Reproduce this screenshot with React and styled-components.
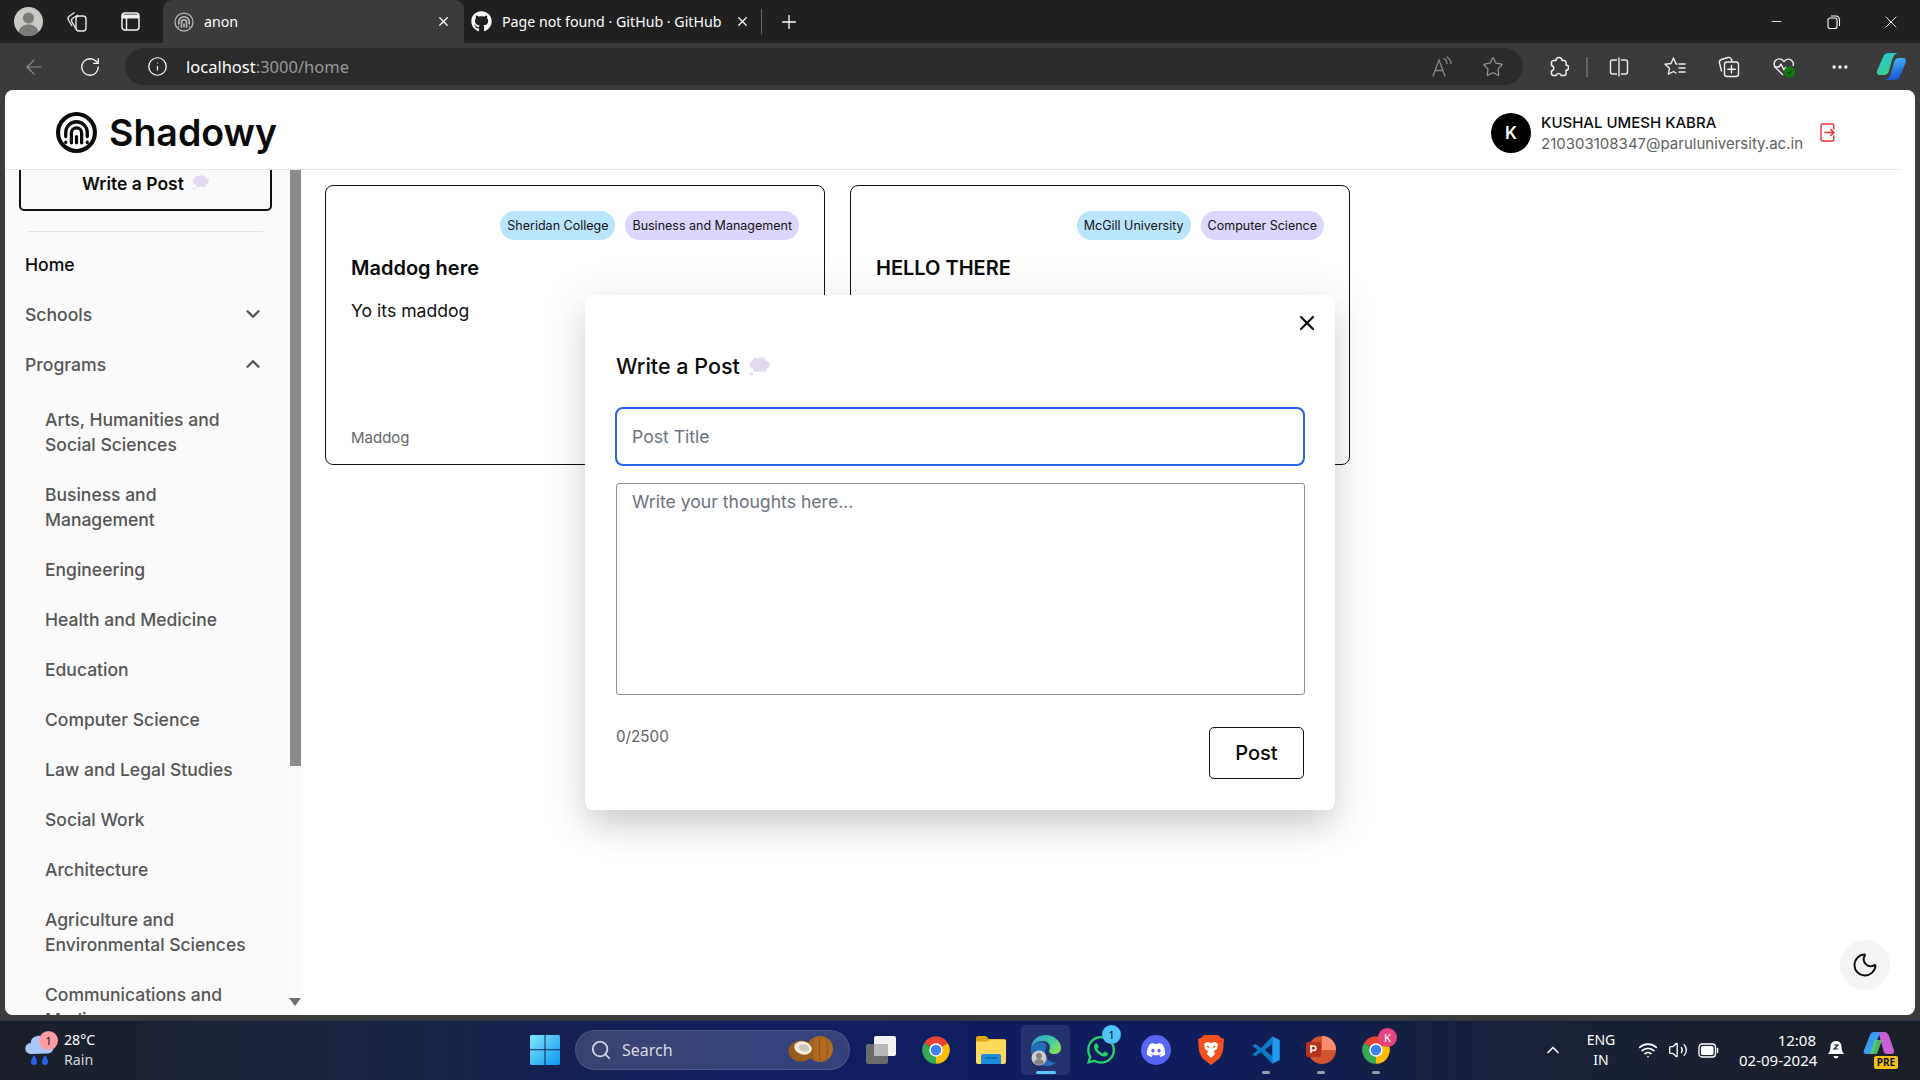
import React from "react";
import styled, { createGlobalStyle } from "styled-components";
import {
  ArrowLeft, ChevronDown, ChevronUp, Ellipsis, Info, Minus, Moon, Plus,
  RotateCw, Search, Star, Volume2, Wifi, X,
} from "lucide-react";
import { FaDiscord, FaGithub, FaWhatsapp } from "react-icons/fa";

const GlobalStyle = createGlobalStyle`
  html, body { margin: 0; padding: 0; height: 100%; overflow: hidden; }
  * { box-sizing: border-box; }
  body { font-family: Inter, "Liberation Sans", sans-serif; background: #3b3b3b; }
`;

const Screen = styled.div`
  width: 1920px;
  height: 1080px;
  display: flex;
  flex-direction: column;
`;

/* browser chrome */
const TabStrip = styled.div`
  height: 43px;
  background: #202020;
  display: flex;
  align-items: center;
  color: #fff;
  font-family: "Noto Sans", sans-serif;
  font-size: 14.2px;
`;
const Slot = styled.div`
  flex: none;
  width: ${(p) => p.$w || 55}px;
  margin-left: ${(p) => p.$ml || 0}px;
  display: flex;
  align-items: center;
  justify-content: center;
  color: ${(p) => p.$color || "#fff"};
`;
const ActiveTab = styled.div`
  width: 301px;
  height: 43px;
  margin-left: 6px;
  padding: 0 13px 0 11px;
  background: #3b3b3b;
  border-radius: 9px 9px 0 0;
  display: flex;
  align-items: center;
  gap: 10px;
`;
const Tab = styled.div`
  width: 297px;
  height: 43px;
  padding: 0 11px 0 7px;
  display: flex;
  align-items: center;
  gap: 10px;
`;
const TabTitle = styled.span`
  flex: 1;
  margin-top: -1px;
  white-space: nowrap;
`;
const TabDivider = styled.div`
  width: 1px;
  height: 25px;
  background: #666;
`;
const Grow = styled.div`
  flex: 1;
`;
const Toolbar = styled.div`
  height: 47px;
  background: #3b3b3b;
  display: flex;
  align-items: center;
  padding-left: 6px;
`;
const AddressBar = styled.div`
  width: 1398px;
  height: 37px;
  margin-left: 7px;
  padding: 0 0 0 22px;
  background: #2b2b2b;
  border-radius: 19px;
  display: flex;
  align-items: center;
  color: #fff;
`;
const Url = styled.div`
  flex: 1;
  margin-left: 18px;
  font-family: "Noto Sans", sans-serif;
  font-size: 16.5px;
  color: #9a9a9a;
  span { color: #fff; }
`;
const ToolDivider = styled.div`
  width: 2px;
  height: 20px;
  background: #666;
`;
const Frame = styled.div`
  flex: 1;
  min-height: 0;
  padding: 0 5px 5px;
  background: #3b3b3b;
`;

/* page */
const Page = styled.div`
  position: relative;
  height: 925px;
  background: #fff;
  border-radius: 8px;
  overflow: hidden;
  display: flex;
  flex-direction: column;
`;
const Header = styled.header`
  flex: none;
  height: 80px;
  margin-right: 15px;
  padding: 6px 65px 0 51px;
  border-bottom: 1px solid #e5e5e5;
  display: flex;
  align-items: center;
  justify-content: space-between;
`;
const Brand = styled.div`
  display: flex;
  align-items: center;
  gap: 12px;
  font-size: 37.5px;
  font-weight: 600;
  color: #0a0a0a;
`;
const User = styled.div`
  display: flex;
  align-items: center;
`;
const Avatar = styled.div`
  width: 40px;
  height: 40px;
  border-radius: 50%;
  background: #000;
  color: #fff;
  font-size: 17px;
  font-weight: 600;
  display: flex;
  align-items: center;
  justify-content: center;
`;
const UserText = styled.div`
  margin: 0 17px 0 10px;
  display: flex;
  flex-direction: column;
  gap: 2px;
`;
const UserName = styled.div`
  font-size: 15px;
  font-weight: 500;
  line-height: 19px;
  color: #0a0a0a;
`;
const UserMail = styled.div`
  font-size: 15px;
  line-height: 19px;
  color: #606060;
`;
const Body = styled.div`
  flex: 1;
  min-height: 0;
  display: flex;
`;
const Sidebar = styled.aside`
  flex: none;
  width: 285px;
  background: #fafafa;
  overflow: hidden;
`;
const SideInner = styled.div`
  margin-top: -14px;
  padding: 0 18px 0 14px;
`;
const WriteButton = styled.div`
  height: 55px;
  border: 2px solid #111;
  border-top-width: 1px;
  border-radius: 5px;
  background: #fafafa;
  display: flex;
  align-items: center;
  justify-content: center;
  gap: 8px;
  font-size: 17.5px;
  font-weight: 600;
  color: #0a0a0a;
`;
const SideRule = styled.hr`
  margin: 20px 9px 0;
  border: 0;
  border-top: 1px solid #e5e5e5;
`;
const NavList = styled.nav`
  margin-top: 7px;
  padding-left: 6px;
`;
const NavRow = styled.div`
  height: 50px;
  padding-right: 8px;
  display: flex;
  align-items: center;
  justify-content: space-between;
  font-size: 17.6px;
  font-weight: 500;
  color: ${(p) => (p.$active ? "#0a0a0a" : "#555")};
`;
const SubList = styled.div`
  padding: 5px 0 0 20px;
`;
const SubItem = styled.div`
  padding: 12.5px 0;
  font-size: 17.5px;
  line-height: 25px;
  font-weight: 500;
  color: #555;
`;
const Scrollbar = styled.div`
  flex: none;
  width: 11px;
  display: flex;
  flex-direction: column;
  justify-content: space-between;
  background: #fbfbfb;
  padding-bottom: 9px;
`;
const Thumb = styled.div`
  height: 596px;
  background: #8b8b8b;
`;
const ScrollArrow = styled.div`
  width: 0;
  height: 0;
  margin-left: -1px;
  border-left: 6.5px solid transparent;
  border-right: 6.5px solid transparent;
  border-top: 8px solid #6f6f6f;
`;
const Main = styled.main`
  flex: 1;
  padding: 15px 0 0 24px;
  display: flex;
  align-items: flex-start;
  gap: 25px;
`;
const Card = styled.article`
  width: 500px;
  height: 280px;
  padding: 25px 25px 0 25px;
  border: 1px solid #111;
  border-radius: 8px;
  display: flex;
  flex-direction: column;
`;
const TagRow = styled.div`
  display: flex;
  justify-content: flex-end;
  gap: 10px;
`;
const Tag = styled.span`
  height: 29px;
  padding: 0 7px;
  border-radius: 15px;
  background: ${(p) => p.$bg};
  font-size: 12.5px;
  line-height: 29px;
  color: #111;
`;
const CardTitle = styled.h3`
  margin: 14px 0 0;
  font-size: 20px;
  line-height: 28px;
  font-weight: 600;
  color: #0a0a0a;
`;
const CardText = styled.p`
  margin: 16px 0 0;
  font-size: 17.6px;
  line-height: 26px;
  color: #111;
`;
const CardAuthor = styled.div`
  margin-top: auto;
  margin-bottom: 16px;
  font-size: 15px;
  line-height: 20px;
  color: #666;
`;

/* dialog */
const Modal = styled.section`
  position: absolute;
  left: 580px;
  top: 205px;
  width: 750px;
  height: 515px;
  padding: 57px 30px 31px;
  background: #fff;
  border-radius: 8px;
  box-shadow: 0 20px 32px -5px rgba(0, 0, 0, 0.13), 0 8px 44px 6px rgba(0, 0, 0, 0.09);
  display: flex;
  flex-direction: column;
`;
const CloseButton = styled.div`
  position: absolute;
  top: 16px;
  right: 16px;
  color: #0a0a0a;
  display: flex;
`;
const ModalTitle = styled.h2`
  margin: 0 0 0 1px;
  display: flex;
  align-items: center;
  gap: 9px;
  font-size: 21.5px;
  line-height: 28px;
  font-weight: 500;
  color: #0a0a0a;
`;
const TitleInput = styled.input`
  margin-top: 27px;
  height: 59px;
  padding: 0 15px;
  border: 2px solid #2563eb;
  border-radius: 8px;
  outline: 0;
  font-family: inherit;
  font-size: 17.6px;
  &::placeholder { color: #6b7280; opacity: 1; }
`;
const BodyInput = styled.textarea`
  margin: 17px 0 0 1px;
  height: 212px;
  padding: 6px 15px;
  border: 1px solid #8a919c;
  border-radius: 3px;
  outline: 0;
  resize: none;
  font-family: inherit;
  font-size: 17.6px;
  line-height: 24px;
  &::placeholder { color: #6b7280; opacity: 1; }
`;
const ModalFooter = styled.div`
  margin-top: 32px;
  padding-right: 1px;
  display: flex;
  justify-content: space-between;
  align-items: flex-start;
`;
const Counter = styled.div`
  margin: 1px 0 0 1px;
  font-size: 15.2px;
  line-height: 18px;
  color: #606060;
`;
const PostButton = styled.div`
  width: 95px;
  height: 52px;
  border: 1px solid #111;
  border-radius: 5px;
  display: flex;
  align-items: center;
  justify-content: center;
  font-size: 20px;
  font-weight: 500;
  color: #0a0a0a;
`;
const MoonButton = styled.div`
  position: absolute;
  right: 25px;
  bottom: 25px;
  width: 50px;
  height: 50px;
  border-radius: 50%;
  background: #f4f4f4;
  color: #0a0a0a;
  display: flex;
  align-items: center;
  justify-content: center;
`;

/* windows taskbar */
const Taskbar = styled.footer`
  flex: none;
  height: 60px;
  padding: 0 0 1px 25px;
  background: linear-gradient(90deg, #1a1f29 0%, #18233f 18%, #0f1f62 40%, #0e1c5c 62%, #17213a 78%, #1b1f28 100%);
  border-top: 1px solid #2b3250;
  display: flex;
  align-items: center;
  color: #fff;
  font-family: "Noto Sans", sans-serif;
  font-size: 14px;
`;
const Weather = styled.div`
  position: relative;
  width: 492px;
  height: 44px;
  display: flex;
  align-items: center;
  gap: 9px;
`;
const Badge = styled.div`
  position: absolute;
  left: ${(p) => p.$l}px;
  top: ${(p) => p.$t}px;
  width: 19px;
  height: 19px;
  border-radius: 50%;
  background: ${(p) => p.$bg};
  color: ${(p) => p.$fg || "#111"};
  font-size: 11.5px;
  line-height: 19px;
  text-align: center;
`;
const WeatherText = styled.div`
  display: flex;
  flex-direction: column;
  line-height: 20px;
  font-size: 14.2px;
`;
const Muted = styled.span`
  color: #d5d8de;
`;
const SearchPill = styled.div`
  flex: none;
  width: 275px;
  height: 40px;
  margin: 0 3px;
  padding: 0 15px 0 14px;
  border-radius: 20px;
  background: rgba(255, 255, 255, 0.16);
  border: 1px solid rgba(255, 255, 255, 0.1);
  display: flex;
  align-items: center;
  gap: 10px;
  font-size: 16px;
  color: #d9dce6;
`;
const TaskSlot = styled.div`
  position: relative;
  flex: none;
  width: 55px;
  height: 50px;
  display: flex;
  align-items: center;
  justify-content: center;
`;
const HoverBox = styled.div`
  position: absolute;
  inset: 0 3px;
  border-radius: 5px;
  background: rgba(255, 255, 255, 0.09);
`;
const RunningDot = styled.div`
  position: absolute;
  left: 50%;
  bottom: 1px;
  width: ${(p) => (p.$wide ? 20 : 8)}px;
  height: 3.5px;
  transform: translateX(-50%);
  border-radius: 2px;
  background: ${(p) => (p.$wide ? "#5cc8fa" : "#9a9fa8")};
`;
const DiscordDisc = styled.div`
  width: 30px;
  height: 30px;
  border-radius: 50%;
  background: #5865f2;
  color: #fff;
  display: flex;
  align-items: center;
  justify-content: center;
`;
const Tray = styled.div`
  margin-left: auto;
  padding-right: 22px;
  display: flex;
  align-items: center;
`;
const TrayLines = styled.div`
  width: ${(p) => p.$w}px;
  margin-left: ${(p) => p.$ml}px;
  display: flex;
  flex-direction: column;
  line-height: 20px;
  font-size: ${(p) => p.$size || 14}px;
  text-align: ${(p) => p.$align};
  white-space: nowrap;
`;
const PreWrap = styled.div`
  position: relative;
  width: 36px;
  height: 38px;
`;
const PreLabel = styled.div`
  position: absolute;
  right: 0;
  bottom: 0;
  width: 24px;
  height: 13px;
  border-radius: 2px;
  background: #f6c21a;
  color: #111;
  font-size: 10px;
  font-weight: 700;
  line-height: 13px;
  text-align: center;
`;

const Bubble = ({ size = 21 }) => (
  <svg width={size} height={(size * 19) / 21} viewBox="0 0 21 19">
    <g fill="#e2d9f0">
      <circle cx="7" cy="4.6" r="3.6" />
      <circle cx="12.500" cy="4.200" r="4" />
      <circle cx="17" cy="7.500" r="3.800" />
      <circle cx="14" cy="11" r="4" />
      <circle cx="8" cy="11" r="4" />
      <circle cx="4.600" cy="7.800" r="3.800" />
      <rect x="5" y="4" width="12" height="8" />
      <circle cx="2.400" cy="17" r="1.600" />
    </g>
  </svg>
);

const Logo = ({ size = 41, ring = 4, color = "#0a0a0a" }) => (
  <svg width={size} height={size} viewBox="0 0 40 40" fill="none" stroke={color} strokeLinecap="round">
    <circle cx="20" cy="20" r={18} strokeWidth={ring} />
    <g strokeWidth="3.200">
      <path d="M9.500 24V20a10.500 10.500 0 0 1 21 0v4" />
      <path d="M15 30v-9.500a5 5 0 0 1 10 0V30" />
      <path d="M20 24v6" />
      <path d="M9.500 29.500v.2M30.500 29.500v.2" />
    </g>
  </svg>
);

const LogoutIcon = () => (
  <svg width="15" height="19" viewBox="0 0 15 19" fill="none" stroke="#ef2b35" strokeWidth="1.4" strokeLinecap="round" strokeLinejoin="round">
    <path d="M13.800 6V2.600a1.600 1.600 0 0 0-1.600-1.600H2.600A1.600 1.600 0 0 0 1 2.600v13.800A1.600 1.600 0 0 0 2.600 18h9.600a1.600 1.600 0 0 0 1.600-1.600V13" />
    <path d="M5 9.500h9M10.800 6.400l3.200 3.100-3.200 3.100" />
  </svg>
);

const ProfileIcon = () => (
  <svg width="29" height="29" viewBox="0 0 29 29">
    <circle cx="14.500" cy="14.500" r="14.500" fill="#c9c9c6" />
    <circle cx="14.500" cy="11" r="5.600" fill="#7a7a78" />
    <path d="M4.500 25c1.500-5.500 5.500-7.500 10-7.500s8.500 2 10 7.500a14.500 14.500 0 0 1-20 0z" fill="#7a7a78" />
  </svg>
);

const WorkspacesIcon = () => (
  <svg width="22" height="24" viewBox="0 0 22 24" fill="none" stroke="#e8e8e8" strokeWidth="1.4" strokeLinejoin="round">
    <rect x="10" y="6" width="10" height="15" rx="3" />
    <path d="M10 19 6 12a3 3 0 0 1 1-4l5-3" />
    <path d="M6 16 2.500 10a3 3 0 0 1 1-4l5-3.500" />
  </svg>
);

const TabsIcon = () => (
  <svg width="19" height="19" viewBox="0 0 19 19" fill="none" stroke="#f2f2f2" strokeWidth="1.5">
    <rect x="1" y="1" width="17" height="17" rx="3" />
    <path d="M1 4.500h17" strokeWidth="4" />
    <path d="M5.500 6v12" />
  </svg>
);

const ReadAloud = () => (
  <svg width="22" height="22" viewBox="0 0 22 22" fill="none" stroke="#8a8a8a" strokeWidth="1.3" strokeLinecap="round">
    <path d="M2 20 8 4l6 16M4.200 14.500h7.600" />
    <path d="M13 2.500c2 1 3 3 3 5M16 1c2.500 1.600 4 3.800 4 6.500" />
  </svg>
);

const PuzzleIcon = () => (
  <svg width="20" height="21" viewBox="0 0 20 21" fill="none" stroke="#f0f0f0" strokeWidth="1.5" strokeLinejoin="round">
    <path d="M7 4.500a3 3 0 0 1 6 0h2.500a2 2 0 0 1 1.500 2V9a2.600 2.600 0 0 1 0 5.200v3.300a2 2 0 0 1-2 2h-2.800a2.700 2.700 0 0 0-5.200 0H4.500a2 2 0 0 1-2-2V15a2.800 2.800 0 0 0 0-5.500V6.500a2 2 0 0 1 2-2z" />
  </svg>
);

const SplitIcon = () => (
  <svg width="20" height="20" viewBox="0 0 20 20" fill="none" stroke="#f0f0f0" strokeWidth="1.4">
    <path d="M8 3H3.500a2 2 0 0 0-2 2v10a2 2 0 0 0 2 2H8M12 3h4.500a2 2 0 0 1 2 2v10a2 2 0 0 1-2 2H12M10 .5v19" />
  </svg>
);

const FavListIcon = () => (
  <svg width="22" height="21" viewBox="0 0 22 21" fill="none" stroke="#f0f0f0" strokeWidth="1.4" strokeLinejoin="round" strokeLinecap="round">
    <path d="M13 8h-1L9.500 2 7 7.500l-6 .7 4.500 4-1.200 6L9.500 15.500 12 17" />
    <path d="M15 8h6M15 12h6M15 16h6" />
  </svg>
);

const CollectionsIcon = () => (
  <svg width="22" height="22" viewBox="0 0 22 22" fill="none" stroke="#f0f0f0" strokeWidth="1.4" strokeLinecap="round">
    <path d="M3.500 15 1.500 7a3 3 0 0 1 2-3.500L10 1.500a3 3 0 0 1 3.500 2L14 5" />
    <rect x="6.500" y="6" width="14" height="14.500" rx="2.500" />
    <path d="M13.500 9.500v7.500M9.800 13.200h7.500" />
  </svg>
);

const HealthIcon = () => (
  <svg width="24" height="24" viewBox="0 0 24 24" fill="none" stroke="#f0f0f0" strokeWidth="1.4" strokeLinejoin="round">
    <path d="M11 20 3.500 12.500a5 5 0 0 1 7.500-7l1 1 1-1a5 5 0 0 1 8 5.500" />
    <path d="M2 12h5l2-3 3 6 2-3" />
    <circle cx="17.500" cy="17" r="5.500" fill="#107c10" stroke="none" />
    <path d="M15 17l2 2 3-3.500" stroke="#0b4d0b" />
  </svg>
);

const Copilot = () => (
  <svg width="31" height="29" viewBox="0 0 31 29">
    <defs>
      <linearGradient id="cpA" x1="0" y1="0" x2="0.6" y2="1">
        <stop offset="0" stopColor="#26c6e8" />
        <stop offset="1" stopColor="#3ccb7f" />
      </linearGradient>
      <linearGradient id="cpB" x1="0.3" y1="0" x2="0.6" y2="1">
        <stop offset="0" stopColor="#43b8f7" />
        <stop offset="1" stopColor="#1b4fd6" />
      </linearGradient>
    </defs>
    <path d="M13 1h9c-3 .8-4.500 2.500-5.500 5.500L13 19c-.8 2.500-2.800 4-5 4H4C1.500 23 .3 21 1.200 18.500L7 5c.9-2.500 3.500-4 6-4z" fill="url(#cpA)" />
    <path d="M18 28H9c3-.8 4.500-2.500 5.500-5.500L18 10c.8-2.500 2.800-4 5-4h4c2.500 0 3.700 2 2.800 4.500L24 24c-.9 2.500-3.500 4-6 4z" fill="url(#cpB)" />
  </svg>
);

const WindowsLogo = () => (
  <svg width="30" height="30" viewBox="0 0 30 30">
    <defs>
      <linearGradient id="winA" x1="0" y1="0" x2="1" y2="1">
        <stop offset="0" stopColor="#7fe6fb" />
        <stop offset="1" stopColor="#0c97ee" />
      </linearGradient>
    </defs>
    <path d="M0 1.500A1.500 1.500 0 0 1 1.500 0h13v14.300H0zM15.500 0h13A1.500 1.500 0 0 1 30 1.500v12.800H15.500zM0 15.300h14.500V30h-13A1.500 1.500 0 0 1 0 28.500zM15.500 15.300H30v13.200a1.500 1.500 0 0 1-1.500 1.500h-13z" fill="url(#winA)" />
  </svg>
);

const RainIcon = () => (
  <svg width="30" height="36" viewBox="0 0 30 36">
    <path d="M6 22a5.500 5.500 0 0 1-.5-11 8 8 0 0 1 15-3 6.500 6.500 0 0 1 3 13.500z" fill="#a9c8f7" />
    <path d="M9 23c2 3 3 5 3 7a3 3 0 0 1-6 0c0-2 1-4 3-7zM20 23c2 3 3 5 3 7a3 3 0 0 1-6 0c0-2 1-4 3-7z" fill="#2a62e8" />
  </svg>
);

const Coconuts = () => (
  <svg width="46" height="28" viewBox="0 0 46 28">
    <ellipse cx="32" cy="13" rx="13" ry="13" fill="#b06a1f" />
    <path d="M26 3c-3 6-3 14 0 21M32 1c-1 8-1 16 0 24M38 3c2 6 2 14 0 21" stroke="#8f5517" strokeWidth="1" fill="none" />
    <ellipse cx="13" cy="15" rx="12.500" ry="10.500" fill="#9a5a1a" />
    <ellipse cx="15" cy="12" rx="9" ry="6.500" fill="#f4ede0" transform="rotate(15 15 12)" />
    <ellipse cx="16" cy="12" rx="5.500" ry="3.500" fill="#cfc7b8" transform="rotate(15 16 12)" />
  </svg>
);

const TaskView = () => (
  <svg width="30" height="28" viewBox="0 0 30 28">
    <rect x="0" y="8" width="22" height="20" rx="2" fill="#6b6b6b" />
    <rect x="8" y="0" width="22" height="20" rx="2" fill="#f2f2f2" />
    <rect x="8" y="8" width="14" height="12" fill="#b9b9b9" />
  </svg>
);

const Chrome = () => (
  <svg width="30" height="30" viewBox="0 0 24 24">
    <path d="M12 12 2.470 6.500A11 11 0 0 1 21.530 6.500z" fill="#ea4335" />
    <path d="M12 12 21.530 6.500A11 11 0 0 1 12 23z" fill="#fbbc04" />
    <path d="M12 12 12 23A11 11 0 0 1 2.470 6.500z" fill="#34a853" />
    <circle cx="12" cy="12" r="5.400" fill="#fff" />
    <circle cx="12" cy="12" r="4.200" fill="#3b82f0" />
  </svg>
);

const FolderIcon = () => (
  <svg width="30" height="28" viewBox="0 0 30 28">
    <path d="M0 2a2 2 0 0 1 2-2h8l3 3h15a2 2 0 0 1 2 2v3H0z" fill="#e0a40c" />
    <path d="M0 5.500h11l3-2h14a2 2 0 0 1 2 2V26a2 2 0 0 1-2 2H2a2 2 0 0 1-2-2z" fill="#ffd85c" />
    <path d="M5 20a2 2 0 0 1 2-2h16a2 2 0 0 1 2 2v8H5z" fill="#1c8bd9" />
    <path d="M9 22h12" stroke="#0d5fa8" strokeWidth="1.500" />
  </svg>
);

const EdgeIcon = () => (
  <svg width="34" height="34" viewBox="0 0 34 34">
    <defs>
      <linearGradient id="edgeA" x1="0" y1="0" x2="1" y2="0.6">
        <stop offset="0" stopColor="#1f9bd8" />
        <stop offset="0.6" stopColor="#2cc0a0" />
        <stop offset="1" stopColor="#6fdc55" />
      </linearGradient>
    </defs>
    <path d="M2 15C3 7 9 2 16 2c9 0 16 6 16 13 0 4-3 6-7 6-3 0-5-1-5-3 0-1 1-2 1-4 0-3-3-6-7-6C8 8 4 11 2 15z" fill="url(#edgeA)" />
    <path d="M2 15c2-4 6-6 10-6 4 0 6 3 5 6-2 5-1 11 6 14 2 1 4 1 5 0a15 15 0 0 1-11 4C9 33 1 25 2 15z" fill="#0f5fb0" />
    <circle cx="10" cy="25" r="7.500" fill="#c9c9c6" />
    <circle cx="10" cy="23" r="3" fill="#777" />
    <path d="M4.800 30c.8-3 3-4 5.200-4s4.400 1 5.200 4a7.500 7.500 0 0 1-10.400 0z" fill="#777" />
  </svg>
);

const BraveIcon = () => (
  <svg width="26" height="30" viewBox="0 0 26 30">
    <path d="M6 0h14l3 3 3 1-1 12-3 7-9 7-9-7-3-7L0 4l3-1z" fill="#f4511e" />
    <path d="M6 9l3-2 4 1 4-1 3 2-1 5-3 2 1 3-4 4-4-4 1-3-3-2z" fill="#fff" />
    <path d="M9 11l2 1.500M17 11l-2 1.500" stroke="#f4511e" strokeWidth="1.500" />
  </svg>
);

const VsCodeIcon = () => (
  <svg width="30" height="30" viewBox="0 0 24 24">
    <path d="M17 1l6 3v16l-6 3z" fill="#1f9cf0" />
    <path d="M17 1 8 10.500 3.500 7 1 8.500 5.500 12 1 15.500 3.500 17 8 13.500 17 23v-6l-6-5 6-5z" fill="#0a7cc7" />
  </svg>
);

const PowerPointIcon = () => (
  <svg width="30" height="30" viewBox="0 0 30 30">
    <circle cx="16" cy="15" r="14" fill="#d35230" />
    <path d="M16 1a14 14 0 0 1 14 14H16z" fill="#ff8f6b" />
    <rect x="0" y="7" width="15" height="15" rx="2" fill="#b7321a" />
    <path d="M5 18v-7h2.700a2 2 0 0 1 0 4.400H5" stroke="#fff" strokeWidth="1.600" fill="none" />
  </svg>
);

const BatteryIcon = () => (
  <svg width="21" height="15" viewBox="0 0 21 15" fill="none">
    <rect x="1" y="1" width="16.500" height="13" rx="3" stroke="#fff" strokeWidth="1.300" />
    <rect x="3" y="3" width="12.500" height="9" rx="1.500" fill="#fff" />
    <path d="M19.500 5.500v4" stroke="#fff" strokeWidth="1.500" strokeLinecap="round" />
  </svg>
);

const BellIcon = () => (
  <svg width="18" height="24" viewBox="0 0 18 24" fill="#fff">
    <path d="M9 3c3.500 0 5.500 2.500 5.500 6 0 3 1 5 2.500 7H1c1.500-2 2.500-4 2.500-7C3.500 5.500 5.500 3 9 3z" />
    <path d="M6.500 18h5a2.500 2.500 0 0 1-5 0z" />
    <path d="M7 7h4l-4 4h4" stroke="#1b1f28" strokeWidth="1.200" fill="none" />
  </svg>
);

const CopilotPre = () => (
  <PreWrap>
    <svg width="32" height="28" viewBox="0 0 32 28">
      <path d="M12 1h8c-2 1-3 3-4 6L12 20c-.6 2-2 3-4 3H4c-2 0-3-2-2-4L8 4c.6-2 2-3 4-3z" fill="#3a9cf0" />
      <path d="M17 1h5c3 0 4 2 5 4l5 14c.8 2-.6 4-2.500 4H25c-2 0-3-1-3.500-3L18 7c-.5-2-1-4-1-6z" fill="#c95fd6" />
      <path d="M8 23l5-14h7l-5 14z" fill="#57d36a" opacity="0.85" />
    </svg>
    <PreLabel>PRE</PreLabel>
  </PreWrap>
);

const subItems = [
  ["Arts, Humanities and", "Social Sciences"],
  ["Business and", "Management"],
  ["Engineering"],
  ["Health and Medicine"],
  ["Education"],
  ["Computer Science"],
  ["Law and Legal Studies"],
  ["Social Work"],
  ["Architecture"],
  ["Agriculture and", "Environmental Sciences"],
  ["Communications and", "Media"],
];

const cards = [
  { school: "Sheridan College", program: "Business and Management", title: "Maddog here", text: "Yo its maddog", author: "Maddog" },
  { school: "McGill University", program: "Computer Science", title: "HELLO THERE", text: "", author: "" },
];

export default function App() {
  return (
    <Screen>
      <GlobalStyle />
      <TabStrip>
        <Slot $w={29} $ml={14}><ProfileIcon /></Slot>
        <Slot $w={50} $ml={9}><WorkspacesIcon /></Slot>
        <Slot $w={54} $ml={1}><TabsIcon /></Slot>
        <ActiveTab>
          <Logo size={20} ring={2.5} color="#bbb" />
          <TabTitle>anon</TabTitle>
          <X size={15} />
        </ActiveTab>
        <Tab>
          <FaGithub size={21} />
          <TabTitle>Page not found · GitHub · GitHub</TabTitle>
          <X size={15} />
        </Tab>
        <TabDivider />
        <Slot $w={54}><Plus size={22} strokeWidth={1.4} /></Slot>
        <Grow />
        <Slot $w={57}><Minus size={15} strokeWidth={1.4} /></Slot>
        <Slot $w={57}>
          <svg width="14" height="14" viewBox="0 0 14 14" fill="none" stroke="#fff" strokeWidth="1.1">
            <rect x="1" y="3" width="9" height="10.500" rx="2" />
            <path d="M4 1h5a3.500 3.500 0 0 1 3.500 3.500V11" />
          </svg>
        </Slot>
        <Slot $w={58}><X size={20} strokeWidth={1.1} /></Slot>
      </TabStrip>
      <Toolbar>
        <Slot $w={56} $color="#8f8f8f"><ArrowLeft size={24} strokeWidth={1.2} /></Slot>
        <Slot $w={56}><RotateCw size={22} strokeWidth={1.4} /></Slot>
        <AddressBar>
          <Info size={21} strokeWidth={1.4} />
          <Url><span>localhost</span>:3000/home</Url>
          <Slot $w={51}><ReadAloud /></Slot>
          <Slot $w={51} $color="#9a9a9a"><Star size={22} strokeWidth={1.3} /></Slot>
          <Slot $w={5} />
        </AddressBar>
        <Slot $ml={8}><PuzzleIcon /></Slot>
        <ToolDivider />
        <Slot $w={56.5} $ml={3}><SplitIcon /></Slot>
        <Slot><FavListIcon /></Slot>
        <Slot $w={53.5}><CollectionsIcon /></Slot>
        <Slot $w={55.7}><HealthIcon /></Slot>
        <Slot $w={56}><Ellipsis size={20} strokeWidth={2} /></Slot>
        <Slot $w={48}><Copilot /></Slot>
      </Toolbar>
      <Frame>
        <Page>
          <Header>
            <Brand>
              <Logo />
              Shadowy
            </Brand>
            <User>
              <Avatar>K</Avatar>
              <UserText>
                <UserName>KUSHAL UMESH KABRA</UserName>
                <UserMail>210303108347@paruluniversity.ac.in</UserMail>
              </UserText>
              <LogoutIcon />
            </User>
          </Header>
          <Body>
            <Sidebar>
              <SideInner>
                <WriteButton>
                  Write a Post <Bubble size={17} />
                </WriteButton>
                <SideRule />
                <NavList>
                  <NavRow $active>Home</NavRow>
                  <NavRow>Schools <ChevronDown size={22} strokeWidth={2.6} color="#555" /></NavRow>
                  <NavRow>Programs <ChevronUp size={22} strokeWidth={2.6} color="#555" /></NavRow>
                  <SubList>
                    {subItems.map((lines) => (
                      <SubItem key={lines[0]}>
                        {lines[0]}
                        {lines[1] && <br />}
                        {lines[1]}
                      </SubItem>
                    ))}
                  </SubList>
                </NavList>
              </SideInner>
            </Sidebar>
            <Scrollbar>
              <Thumb />
              <ScrollArrow />
            </Scrollbar>
            <Main>
              {cards.map((card) => (
                <Card key={card.title}>
                  <TagRow>
                    <Tag $bg="#bae6fd">{card.school}</Tag>
                    <Tag $bg="#ddd6fe">{card.program}</Tag>
                  </TagRow>
                  <CardTitle>{card.title}</CardTitle>
                  <CardText>{card.text}</CardText>
                  <CardAuthor>{card.author}</CardAuthor>
                </Card>
              ))}
            </Main>
          </Body>
          <Modal>
            <CloseButton><X size={24} strokeWidth={2.2} /></CloseButton>
            <ModalTitle>Write a Post <Bubble /></ModalTitle>
            <TitleInput placeholder="Post Title" />
            <BodyInput placeholder="Write your thoughts here..." />
            <ModalFooter>
              <Counter>0/2500</Counter>
              <PostButton>Post</PostButton>
            </ModalFooter>
          </Modal>
          <MoonButton><Moon size={28} strokeWidth={1.6} /></MoonButton>
        </Page>
      </Frame>
      <Taskbar>
        <Weather>
          <RainIcon />
          <WeatherText>
            <span>28°C</span>
            <Muted>Rain</Muted>
          </WeatherText>
          <Badge $l={14} $t={3} $bg="#ff9aa2">1</Badge>
        </Weather>
        <TaskSlot><WindowsLogo /></TaskSlot>
        <SearchPill>
          <Search size={22} strokeWidth={1.8} color="#dfe2ea" />
          <Grow>Search</Grow>
          <Coconuts />
        </SearchPill>
        <TaskSlot><TaskView /></TaskSlot>
        <TaskSlot><Chrome /></TaskSlot>
        <TaskSlot><FolderIcon /></TaskSlot>
        <TaskSlot>
          <HoverBox />
          <EdgeIcon />
          <RunningDot $wide />
        </TaskSlot>
        <TaskSlot>
          <FaWhatsapp size={32} color="#25d366" />
          <Badge $l={29} $t={0} $bg="#4fc3f7">1</Badge>
        </TaskSlot>
        <TaskSlot>
          <DiscordDisc><FaDiscord size={20} /></DiscordDisc>
        </TaskSlot>
        <TaskSlot><BraveIcon /></TaskSlot>
        <TaskSlot>
          <VsCodeIcon />
          <RunningDot />
        </TaskSlot>
        <TaskSlot>
          <PowerPointIcon />
          <RunningDot />
        </TaskSlot>
        <TaskSlot>
          <Chrome />
          <Badge $l={30} $t={3} $bg="#e8447f" $fg="#fff">K</Badge>
          <RunningDot />
        </TaskSlot>
        <Tray>
          <Slot $w={28}><ChevronUp size={20} strokeWidth={2} /></Slot>
          <TrayLines $w={40} $ml={14} $align="center">
            <span>ENG</span>
            <span>IN</span>
          </TrayLines>
          <Slot $w={30} $ml={12}><Wifi size={20} strokeWidth={2} /></Slot>
          <Slot $w={30}><Volume2 size={20} strokeWidth={1.6} /></Slot>
          <Slot $w={30}><BatteryIcon /></Slot>
          <TrayLines $w={77} $ml={16} $align="right" $size={15}>
            <span>12:08</span>
            <span>02-09-2024</span>
          </TrayLines>
          <Slot $w={20} $ml={10}><BellIcon /></Slot>
          <Slot $w={36} $ml={16}><CopilotPre /></Slot>
        </Tray>
      </Taskbar>
    </Screen>
  );
}
